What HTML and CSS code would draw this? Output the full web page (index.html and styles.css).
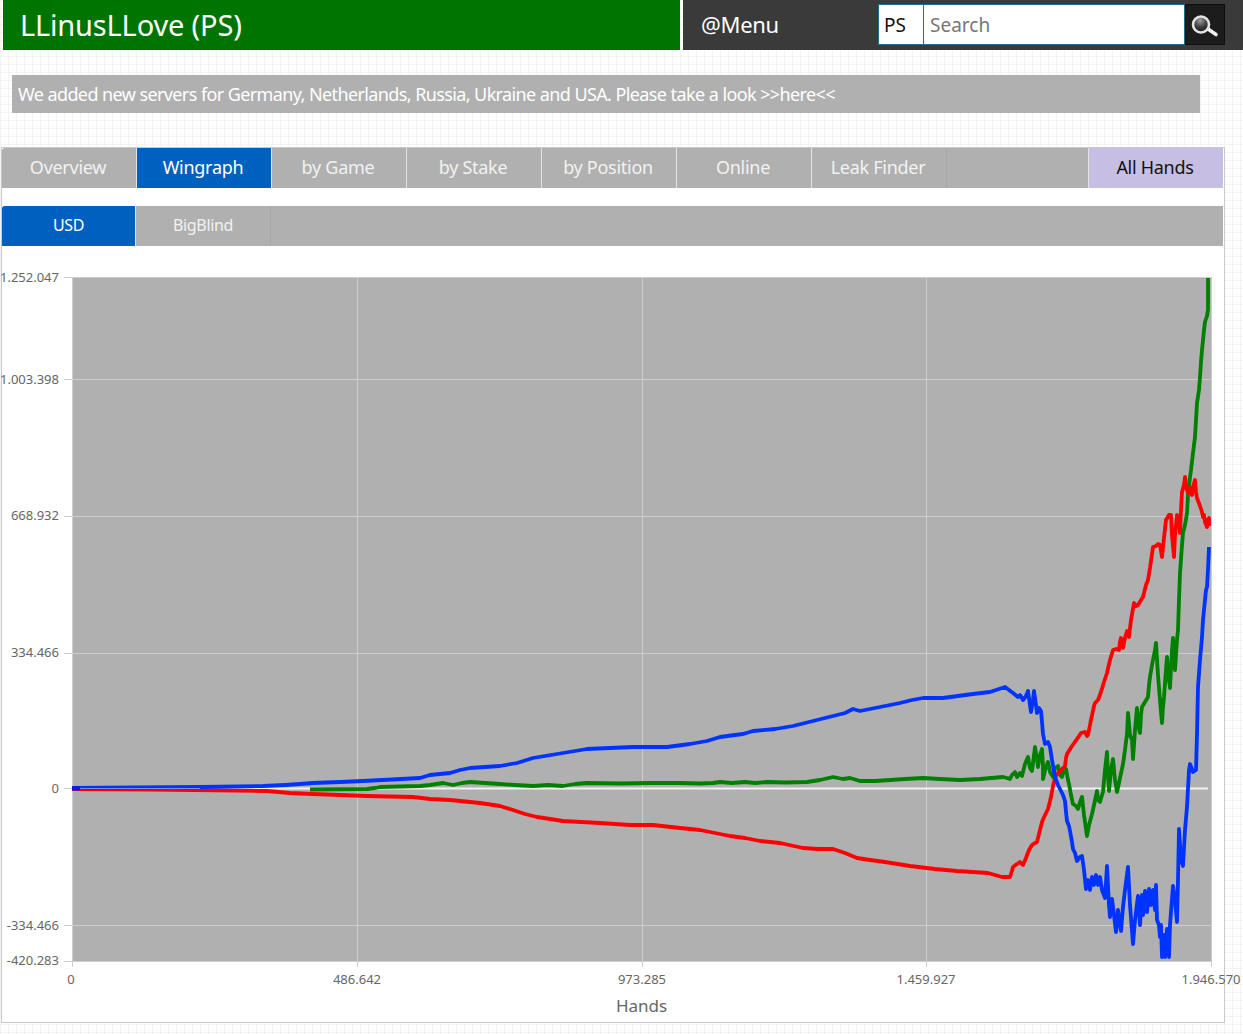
FILE: index.html
```html
<!DOCTYPE html>
<html lang="en">
<head>
<meta charset="utf-8">
<title>LLinusLLove (PS)</title>
<link rel="stylesheet" href="styles.css">
</head>
<body>
<header class="topbar">
  <div class="brand">LLinusLLove (PS)</div>
  <nav class="menu">
    <span class="menu-label">@Menu</span>
    <form class="search">
      <span class="site">PS</span>
      <span class="query">Search</span>
      <span class="go">
        <svg class="go-icon" width="32" height="32" viewBox="0 0 32 32">
          <defs>
            <radialGradient id="lens" cx="0.45" cy="0.25" r="0.8">
              <stop offset="0" stop-color="#a0a0a0"/>
              <stop offset="0.55" stop-color="#3a3a3a"/>
              <stop offset="1" stop-color="#151515"/>
            </radialGradient>
          </defs>
          <line x1="19" y1="20" x2="27" y2="25.5" stroke="#f0f0f0" stroke-width="3.6" stroke-linecap="round"/>
          <circle cx="12" cy="15.5" r="8" fill="url(#lens)" stroke="#e4e4e4" stroke-width="2.6"/>
        </svg>
      </span>
    </form>
  </nav>
</header>

<p class="notice">We added new servers for Germany, Netherlands, Russia, Ukraine and USA. Please take a look &gt;&gt;here&lt;&lt;</p>

<main class="panel">
  <div class="tabs">
    <a class="tab">Overview</a>
    <a class="tab active">Wingraph</a>
    <a class="tab">by Game</a>
    <a class="tab">by Stake</a>
    <a class="tab">by Position</a>
    <a class="tab">Online</a>
    <a class="tab">Leak Finder</a>
    <a class="tab filter">All Hands</a>
  </div>
  <div class="tabs subtabs">
    <a class="tab active">USD</a>
    <a class="tab">BigBlind</a>
  </div>

  <svg class="chart" width="1222" height="776" viewBox="2 246 1222 776">
    <rect class="plot" x="72" y="277" width="1139" height="684"/>
    <path class="grid" d="M64 277.5H1211M64 379.5H1211M64 516.5H1211M64 653.5H1211M64 925.5H1211M64 961.5H1211M64 788.5H72M72.5 277V967M357.5 277V967M642.5 277V967M926.5 277V967M1211.5 277V967"/>
    <path class="zero" d="M72 788.5H1208"/>

    <polyline class="series green" points="310,789.5 367,789 375,788 380,787 400,786.5 420,786 430,785 443,783 453,785 462,783 470,782 485,783 500,784 515,785 533,786 548,785 563,786 575,784 587,783 620,783.5 650,783 680,783 700,783.5 713,783 720,782 732,783 745,782 755,783 767,782 785,782.5 807,782 820,780 833,777 838,778 843,779 850,778 860,781 875,781 890,780 905,779 923,778 940,779 960,780 980,779 1003,777 1007,778 1010,779 1012,775 1015,772 1017,777 1020,773 1022,776 1025,764 1028,757 1030,768 1032,771 1034,755 1035,747 1037,760 1038,767 1040,755 1042,749 1043,766 1043,779 1045,770 1048,762 1050,772 1053,777 1055,768 1058,766 1060,775 1062,777 1064,770 1066,769 1068,780 1069,784 1071,795 1073,804 1076,806 1078,809 1080,802 1082,797 1084,815 1087,836 1089,825 1092,814 1094,805 1097,791 1098,800 1100,802 1102,795 1103,792 1105,770 1107,752 1108,775 1109,791 1111,770 1113,759 1115,780 1117,792 1120,778 1123,764 1125,750 1127,734 1128,713 1130,735 1132,740 1133,759 1135,730 1137,708 1138,725 1140,733 1141,715 1142,707 1145,702 1148,697 1149,685 1150,677 1152,665 1153,660 1155,650 1156,643 1158,675 1160,700 1161,712 1162,723 1163,707 1164,697 1166,670 1167,657 1169,680 1170,688 1172,650 1173,638 1174,660 1175,670 1177,640 1178,630 1179,600 1180,573 1182,545 1183,533 1185,525 1187,513 1188,495 1190,477 1191,470 1193,453 1195,437 1196,420 1197,403 1199,390 1200,377 1201,362 1202,350 1203,340 1204,330 1205,322 1207,316 1208,310 1208,278"/>

    <polyline class="series red" points="72,789 150,789.5 267,791 290,793 313,794 340,795 367,796 390,796.5 413,797 430,799 450,800 465,801.5 480,803 500,806 513,810 525,814 537,817 550,819 563,821 600,823 630,825 653,825 680,828 700,830 730,836 745,838 760,841 780,843 803,848 818,849 833,849 845,853 857,858 870,860 885,862 910,866 935,869 957,871 988,873 995,875 1002,877 1010,877 1012,871 1013,867 1017,864 1020,862 1023,865 1026,858 1029,850 1032,845 1035,843 1037,842 1040,830 1042,822 1045,815 1048,809 1051,797 1053,786 1055,778 1057,774 1061,770 1065,766 1066,758 1067,754 1072,746 1077,739 1081,733 1085,732 1087,736 1088,735 1091,720 1094,706 1095,703 1098,700 1101,692 1104,682 1107,673 1110,660 1113,650 1116,649 1119,650 1120,642 1121,638 1123,648 1125,638 1127,631 1129,637 1131,620 1134,603 1136,606 1138,605 1141,600 1143,597 1146,585 1148,580 1150,568 1153,547 1156,546 1158,544 1160,545 1162,557 1164,538 1166,520 1169,515 1171,515 1172,535 1174,557 1175,535 1177,515 1179,522 1180,533 1181,510 1182,492 1184,485 1185,477 1187,490 1188,493 1190,488 1192,495 1193,487 1195,480 1196,492 1197,498 1200,506 1202,512 1203,517 1204,515 1205,522 1207,527 1208,520 1209,518 1209,526"/>

    <polyline class="series blue" points="72,788 200,787 263,786 285,785 300,784 313,783 340,782 363,781 392,779.5 420,778 430,775 450,773 460,770 470,768 485,767 500,766 517,763 533,758 545,756 557,754 587,749 610,748 633,747 667,747 690,744 707,741 720,737 735,735 743,734 753,731 775,729 793,726 805,723 817,720 837,715 845,713 853,709 860,711 880,707 900,703 912,700 923,698 943,698 958,696 973,694 990,692 1005,687 1009,690 1013,693 1018,697 1020,695 1023,700 1026,696 1028,691 1030,705 1031,712 1033,700 1034,691 1036,705 1037,713 1039,708 1041,711 1042,722 1043,734 1045,744 1048,742 1050,747 1052,760 1055,777 1058,785 1060,789 1063,795 1065,801 1066,812 1067,821 1069,826 1070,831 1072,842 1073,849 1075,853 1077,861 1080,857 1082,856 1084,870 1086,889 1088,880 1090,890 1092,877 1094,885 1096,875 1098,885 1100,877 1102,890 1105,898 1107,866 1109,905 1110,917 1112,899 1114,915 1116,932 1118,910 1120,925 1121,931 1123,907 1125,890 1128,867 1130,905 1133,944 1135,920 1138,896 1140,925 1142,895 1143,915 1145,891 1147,912 1149,889 1151,905 1153,890 1155,910 1156,885 1157,920 1159,925 1160,937 1161,925 1162,957 1164,935 1165,957 1167,929 1169,957 1170,925 1173,886 1175,900 1177,922 1178,880 1179,829 1181,860 1183,866 1185,830 1187,807 1189,770 1190,764 1193,772 1196,770 1197,734 1198,687 1200,660 1202,637 1203,620 1205,600 1206,590 1207,587 1208,570 1209,547"/>

    <path class="start" d="M72 788.5H80"/>
    <path class="zero-over" d="M80 788.5H200"/>

    <g class="y-labels">
      <text x="59" y="282">1.252.047</text>
      <text x="59" y="384">1.003.398</text>
      <text x="59" y="520">668.932</text>
      <text x="59" y="657">334.466</text>
      <text x="59" y="793">0</text>
      <text x="59" y="930">-334.466</text>
      <text x="59" y="965">-420.283</text>
    </g>
    <g class="x-labels">
      <text x="71" y="984">0</text>
      <text x="357" y="984">486.642</text>
      <text x="642" y="984">973.285</text>
      <text x="926" y="984">1.459.927</text>
      <text x="1211" y="984">1.946.570</text>
    </g>
    <text class="axis-title" x="641.5" y="1012">Hands</text>
  </svg>
</main>
</body>
</html>
```

FILE: styles.css
```css
* { box-sizing: border-box; }

html, body { margin: 0; padding: 0; }

body {
  width: 1243px;
  height: 1034px;
  overflow: hidden;
  font-family: "Noto Sans", "Open Sans", sans-serif;
  background-color: #fff;
  background-image:
    repeating-linear-gradient(to right, #f3f3f3 0 1px, transparent 1px 8px),
    repeating-linear-gradient(to bottom, #f3f3f3 0 1px, transparent 1px 8px);
}

.topbar {
  display: flex;
  gap: 3px;
  height: 50px;
  padding-left: 3px;
}

.brand {
  width: 677px;
  padding-left: 17px;
  background: #007400;
  color: #fff;
  font-size: 29px;
  line-height: 49px;
  letter-spacing: -0.17px;
}

.menu {
  flex: 1;
  display: flex;
  align-items: center;
  padding-left: 18px;
  background: #3a3a3a;
  color: #fff;
}

.menu-label {
  width: 178px;
  padding-bottom: 2px;
  font-size: 22px;
  letter-spacing: -0.3px;
}

.search {
  display: flex;
  align-self: flex-start;
  height: 41px;
  margin: 4px 0 0 -1px;
}

.site, .query {
  display: flex;
  align-items: center;
  background: #fff;
  border: 1px solid #1c6f8e;
  font-size: 19px;
}

.site {
  width: 46px;
  padding-left: 5px;
  color: #111;
}

.query {
  width: 262px;
  margin-left: -1px;
  padding-left: 6px;
  color: #777;
}

.go {
  display: flex;
  align-items: center;
  justify-content: center;
  width: 40px;
  height: 41px;
  background: #1c1c1c;
  border: 1px solid #0e0e0e;
}

.notice {
  margin: 25px 43px 0 12px;
  height: 38px;
  padding-left: 6px;
  background: #b0b0b0;
  color: #fff;
  font-size: 18px;
  line-height: 38px;
  letter-spacing: -0.63px;
  word-spacing: 0.2px;
}

.panel {
  width: 1224px;
  height: 876px;
  margin: 34px 0 0 1px;
  padding: 0 1px 0 0;
  background: #fff;
  border: 1px solid #c8c8c8;
}

.tabs {
  display: flex;
  height: 40px;
  background: #b0b0b0;
  border-top-left-radius: 3px;
}

.tab {
  width: 135px;
  padding-right: 2px;
  border-right: 1px solid #e4e4e4;
  color: #f2f2f2;
  font-size: 18px;
  line-height: 38px;
  text-align: center;
  letter-spacing: -0.28px;
}

.tab:nth-child(7) { border-right-color: #a6a6a6; }

.tab.active {
  background: #0060c0;
  color: #fff;
}

.tab.filter {
  width: 135px;
  margin-left: auto;
  background: #c6bfe3;
  color: #111;
  border-right: 0;
  border-left: 1px solid #e4e4e4;
}

.subtabs {
  margin-top: 18px;
}

.subtabs .tab {
  padding-right: 0;
  font-size: 16px;
  letter-spacing: -0.35px;
  border-right-color: #a6a6a6;
}

.subtabs .tab.active {
  width: 134px;
  border-right-color: #e4e4e4;
  border-top-left-radius: 3px;
}

.chart {
  display: block;
  overflow: visible;
}

.plot { fill: #b0b0b0; }

.grid {
  fill: none;
  stroke: #cdcdcd;
  stroke-width: 1;
}

.zero {
  fill: none;
  stroke: #f2f2f2;
  stroke-width: 2;
}

.zero-over {
  fill: none;
  stroke: #ffffff;
  stroke-opacity: 0.45;
  stroke-width: 1;
}

.start {
  fill: none;
  stroke: #0a1fd0;
  stroke-width: 4;
}

.series {
  fill: none;
  stroke-width: 3.8;
  stroke-linejoin: round;
  filter: blur(0.35px);
}

.green { stroke: #008000; }
.red { stroke: #ff0000; }
.blue { stroke: #0033ff; }

.y-labels text, .x-labels text {
  fill: #666;
  font-size: 13px;
}

.y-labels text { text-anchor: end; }
.x-labels text { text-anchor: middle; }

.axis-title {
  fill: #666;
  font-size: 17px;
  text-anchor: middle;
}
```
